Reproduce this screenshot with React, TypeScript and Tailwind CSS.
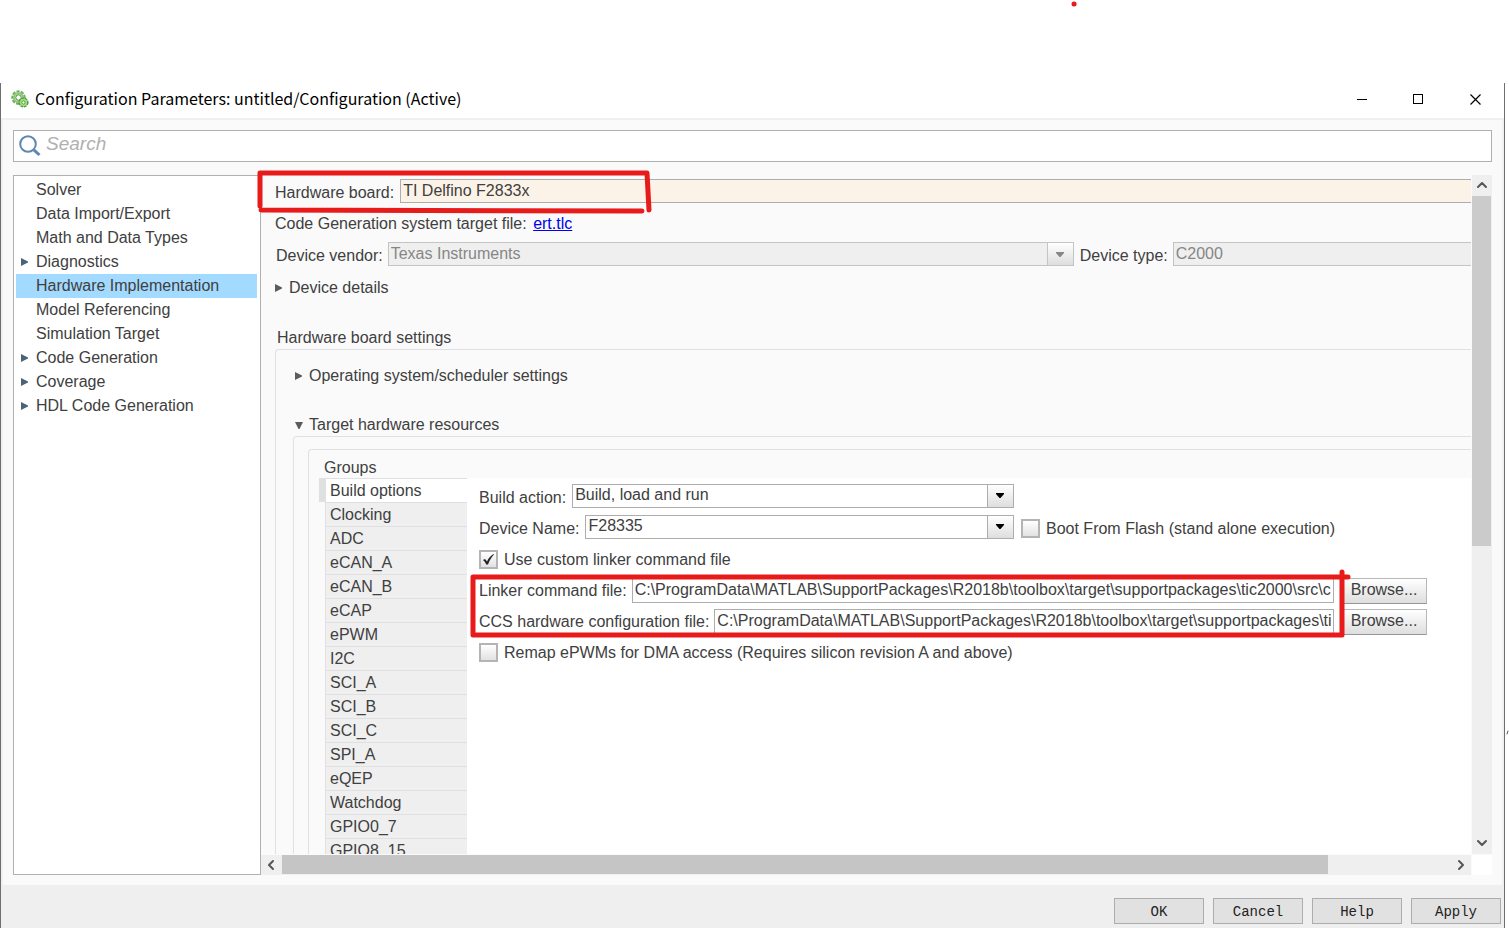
import type { ReactNode } from "react";
import { ChevronDown, ChevronLeft, ChevronRight, ChevronUp } from "lucide-react";
import clsx from "clsx";

interface TreeItem {
  label: string;
  expandable?: boolean;
  selected?: boolean;
}

const TREE: TreeItem[] = [
  { label: "Solver" },
  { label: "Data Import/Export" },
  { label: "Math and Data Types" },
  { label: "Diagnostics", expandable: true },
  { label: "Hardware Implementation", selected: true },
  { label: "Model Referencing" },
  { label: "Simulation Target" },
  { label: "Code Generation", expandable: true },
  { label: "Coverage", expandable: true },
  { label: "HDL Code Generation", expandable: true },
];

const GROUPS = [
  "Build options",
  "Clocking",
  "ADC",
  "eCAN_A",
  "eCAN_B",
  "eCAP",
  "ePWM",
  "I2C",
  "SCI_A",
  "SCI_B",
  "SCI_C",
  "SPI_A",
  "eQEP",
  "Watchdog",
  "GPIO0_7",
  "GPIO8_15",
];

const SUPPORT_PATH = "C:\\ProgramData\\MATLAB\\SupportPackages\\R2018b\\toolbox\\target\\supportpackages\\tic2000\\src\\c28335.cmd";

function Triangle({ open = false, className }: { open?: boolean; className?: string }) {
  return (
    <svg viewBox="0 0 8 8" className={clsx("size-2 shrink-0 fill-current", className)}>
      <path d={open ? "M0 1h8L4.5 8h-1z" : "M0 0l7 3.5v1L0 8z"} />
    </svg>
  );
}

function GearLogo() {
  return (
    <svg viewBox="0 0 18 18" className="size-[18px]">
      <circle cx="7.5" cy="7.5" r="6.2" fill="none" stroke="#6fae5c" strokeWidth="2" strokeDasharray="3.2 1.2" />
      <circle cx="7.5" cy="7.5" r="4.6" fill="#c9ecb6" stroke="#8cc777" strokeWidth="2" />
      <circle cx="7.5" cy="7.5" r="2.7" fill="#fff" stroke="#4f8f40" />
      <circle cx="12.5" cy="12.5" r="4.4" fill="#8fd069" stroke="#4f9a3c" strokeWidth="1.4" strokeDasharray="2.6 1" />
      <circle cx="12.5" cy="12.5" r="3.4" fill="#a9de88" />
      <circle cx="12.5" cy="12.5" r="1.6" fill="#fff" stroke="#4a9a34" />
    </svg>
  );
}

function TitleBar() {
  return (
    <header className="flex h-[37px] shrink-0 items-center border-b-2 border-[#f0f0f0] bg-white pb-[3px] pl-2.5 text-black">
      <GearLogo />
      <h1 className="ml-1.5 flex-1 pb-0.5 font-['Noto_Sans_CJK_SC',sans-serif] text-base leading-5">
        Configuration Parameters: untitled/Configuration (Active)
      </h1>
      <button type="button" aria-label="Minimize" className="flex h-full w-14 items-center justify-center">
        <svg viewBox="0 0 10 10" className="size-2.5" shapeRendering="crispEdges">
          <path d="M0 5.5h10" stroke="currentColor" />
        </svg>
      </button>
      <button type="button" aria-label="Maximize" className="flex h-full w-14 items-center justify-center">
        <svg viewBox="0 0 10 10" className="size-2.5" shapeRendering="crispEdges">
          <path d="M.5.5h9v9h-9z" fill="none" stroke="currentColor" />
        </svg>
      </button>
      <button type="button" aria-label="Close" className="flex h-full w-[58px] items-center justify-center">
        <svg viewBox="0 0 11 11" className="size-[11px]">
          <path d="M.5.5l10 10M10.5.5l-10 10" stroke="currentColor" strokeWidth="1.2" />
        </svg>
      </button>
    </header>
  );
}

function SearchBox() {
  return (
    <div className="flex h-8 shrink-0 items-center border border-[#b0b0b0] bg-white pl-1">
      <svg viewBox="0 0 24 24" className="size-6 shrink-0" fill="none" stroke="#5f87b2">
        <circle cx="10" cy="10" r="7.8" strokeWidth="2" />
        <path d="M15.8 15.8l5.7 5.2" strokeWidth="3" />
      </svg>
      <input
        type="search"
        aria-label="Search"
        placeholder="Search"
        className="mb-1 ml-1 flex-1 text-[19px] leading-6 italic outline-none placeholder:text-[#b0b0b0]"
      />
    </div>
  );
}

function NavTree() {
  return (
    <nav className="w-[248px] shrink-0 border border-[#b0b0b0] bg-white p-0.5 pr-[3px]">
      <ul>
        {TREE.map((item) => (
          <li key={item.label}>
            <button
              type="button"
              className={clsx(
                "flex h-6 w-full items-center pb-px pl-[5px] text-left",
                item.selected && "bg-[#a3daff]"
              )}
            >
              <span className="flex w-[15px] text-[#4c6378]">{item.expandable && <Triangle />}</span>
              {item.label}
            </button>
          </li>
        ))}
      </ul>
    </nav>
  );
}

interface SelectProps {
  id: string;
  value: string;
  disabled?: boolean;
  className?: string;
}

function Select({ id, value, disabled, className }: SelectProps) {
  return (
    <div className={clsx("relative h-6 shrink-0", className)}>
      <select
        id={id}
        disabled={disabled}
        className={clsx(
          "block h-6 w-full appearance-none border pb-px pl-0.5 leading-5 opacity-100",
          disabled ? "border-[#c4c4c4] bg-[#efefef] text-[#868686]" : "border-[#adadad] bg-white"
        )}
      >
        <option>{value}</option>
      </select>
      <span
        className={clsx(
          "pointer-events-none absolute inset-y-0 right-0 flex w-[27px] items-center justify-center border bg-linear-to-b from-white to-[#dedede] pr-px",
          disabled ? "border-[#c4c4c4] text-[#868686]" : "border-[#adadad] text-black"
        )}
      >
        <svg viewBox="0 0 8 5" className="h-[5px] w-2 fill-current">
          <path d="M0 0h8v1L4.5 5h-1L0 1z" />
        </svg>
      </span>
    </div>
  );
}

function CheckBox({ id, label, checked = false }: { id: string; label: string; checked?: boolean }) {
  return (
    <div className="flex items-center gap-1.5">
      <span className="relative size-[19px]">
        <input
          id={id}
          type="checkbox"
          defaultChecked={checked}
          className="peer block size-[19px] appearance-none border-2 border-[#b4b4b4] bg-linear-to-b from-white to-[#e2e2e2]"
        />
        <svg
          viewBox="0 0 19 19"
          className="pointer-events-none absolute inset-0 hidden size-[19px] fill-[#222] peer-checked:block"
        >
          <path d="M4 10l2-1 2 2.6C9.5 8 12 5.2 14.8 4l.2.5C12.500 7 10.500 10.500 9 14.500H7.200C6.500 12.800 5.500 11.300 4 10z" />
        </svg>
      </span>
      <label htmlFor={id}>{label}</label>
    </div>
  );
}

function Row({ children }: { children: ReactNode }) {
  return <div className="flex h-[31px] items-center">{children}</div>;
}

function FileRow({ id, label, value }: { id: string; label: string; value: string }) {
  return (
    <Row>
      <label htmlFor={id} className="shrink-0">
        {label}
      </label>
      <input
        id={id}
        type="text"
        defaultValue={value}
        className="mr-[9px] ml-[5px] h-[25px] min-w-0 flex-1 border border-[#adadad] bg-white px-0.5 pb-0.5"
      />
      <button
        type="button"
        className="h-[26px] w-[84px] shrink-0 border border-[#b8b8b8] border-b-[#969696] bg-linear-to-b from-white to-[#dedede] pr-0.5 pb-px"
      >
        Browse...
      </button>
    </Row>
  );
}

function Disclosure({ label, open }: { label: string; open?: boolean }) {
  return (
    <button type="button" aria-expanded={!!open} className="flex h-[23px] items-center gap-1.5 text-left">
      <Triangle open={open} className="mt-px text-[#5c5c5c]" />
      {label}
    </button>
  );
}

function GroupTabs() {
  return (
    <div role="tablist" aria-label="Groups" className="w-[148px] shrink-0">
      {GROUPS.map((group, i) => (
        <button
          key={group}
          role="tab"
          type="button"
          aria-selected={i === 0}
          className={clsx(
            "block h-6 border-t border-[#e0e0e0] text-left",
            i === 0 ? "w-full border-l-[7px] bg-white pl-1" : "ml-1.5 w-[142px] border-l bg-[#efefef] pl-1"
          )}
        >
          {group}
        </button>
      ))}
    </div>
  );
}

function BuildOptions() {
  return (
    <div role="tabpanel" className="min-w-0 flex-1 bg-white pt-1 pl-3">
      <div className="w-[948px]">
        <Row>
          <div className="flex w-[535px] items-center gap-1.5">
            <label htmlFor="build-action">Build action:</label>
            <Select id="build-action" value="Build, load and run" className="mb-1 flex-1" />
          </div>
        </Row>
        <Row>
          <div className="mr-[7px] flex w-[535px] items-center gap-1.5">
            <label htmlFor="device-name">Device Name:</label>
            <Select id="device-name" value="F28335" className="mb-1 flex-1" />
          </div>
          <CheckBox id="boot-flash" label="Boot From Flash (stand alone execution)" />
        </Row>
        <Row>
          <CheckBox id="custom-linker" label="Use custom linker command file" checked />
        </Row>
        <FileRow id="linker-file" label="Linker command file:" value={SUPPORT_PATH} />
        <FileRow id="ccs-file" label="CCS hardware configuration file:" value={SUPPORT_PATH} />
        <Row>
          <CheckBox id="remap-epwm" label="Remap ePWMs for DMA access (Requires silicon revision A and above)" />
        </Row>
      </div>
    </div>
  );
}

function HardwarePane() {
  return (
    <main className="flex min-h-0 flex-1 flex-col overflow-hidden pl-3.5">
      <div className="flex shrink-0 items-center gap-1.5 pt-1">
        <label htmlFor="hardware-board" className="pt-1">
          Hardware board:
        </label>
        <select
          id="hardware-board"
          className="h-6 flex-1 appearance-none border border-r-0 border-[#adadad] bg-[#fcf3e8] pb-px pl-0.5 leading-5"
        >
          <option>TI Delfino F2833x</option>
        </select>
      </div>
      <p className="mt-[9px] h-6 shrink-0 leading-6">
        Code Generation system target file:{" "}
        <a href="#ert" className="ml-0.5 text-[#0000ee] underline">
          ert.tlc
        </a>
      </p>
      <div className="mt-1.5 flex shrink-0 items-center">
        <label htmlFor="device-vendor" className="shrink-0 pt-1 pr-[5px] pl-px">
          Device vendor:
        </label>
        <Select id="device-vendor" value="Texas Instruments" disabled className="w-[686px]" />
        <label htmlFor="device-type" className="shrink-0 pt-1 pr-[5px] pl-1.5">
          Device type:
        </label>
        <select
          id="device-type"
          disabled
          className="h-6 min-w-0 flex-1 appearance-none border border-r-0 border-[#c4c4c4] bg-[#efefef] pb-px pl-0.5 leading-5 text-[#868686] opacity-100"
        >
          <option>C2000</option>
        </select>
      </div>
      <div className="mt-2.5 shrink-0">
        <Disclosure label="Device details" />
      </div>
      <h2 className="mt-[27px] h-[23px] shrink-0 pl-0.5 leading-6">Hardware board settings</h2>
      <section className="flex min-h-0 flex-1 flex-col rounded-tl border-t border-l border-[#e0e0e0] pt-3.5 pl-[17px]">
        <div className="pl-0.5">
          <Disclosure label="Operating system/scheduler settings" />
        </div>
        <div className="mt-[26px] pl-0.5">
          <Disclosure label="Target hardware resources" open />
        </div>
        <div className="flex min-h-0 flex-1 flex-col rounded-tl border-t border-l border-[#e0e0e0] pt-3 pl-3.5">
          <div className="flex min-h-0 flex-1 flex-col rounded-tl border-t border-l border-[#e0e0e0] pt-2 pl-2.5">
            <h3 className="h-5 shrink-0 pl-[5px] leading-5">Groups</h3>
            <div className="flex min-h-0 flex-1">
              <GroupTabs />
              <BuildOptions />
            </div>
          </div>
        </div>
      </section>
    </main>
  );
}

function ScrollBars({ children }: { children: ReactNode }) {
  return (
    <div className="grid min-w-0 flex-1 grid-cols-[minmax(0,1fr)_20px] grid-rows-[minmax(0,1fr)_20px] gap-px bg-[#fafafa]">
      <div className="flex min-h-0 min-w-0">{children}</div>
      <div className="flex min-h-0 flex-col items-center bg-[#efefef] text-[#555]">
        <ChevronUp className="mt-0.5 mb-[3px] size-4 shrink-0" strokeWidth={3} />
        <div className="mr-px h-[350px] w-[19px] bg-[#cbcbcb]" />
        <ChevronDown className="mt-auto mb-[3px] size-4 shrink-0" strokeWidth={3} />
      </div>
      <div className="flex items-center bg-[#efefef] text-[#555]">
        <ChevronLeft className="mr-[3px] ml-0.5 size-4 shrink-0" strokeWidth={3} />
        <div className="mb-px h-[19px] w-[1046px] bg-[#c5c5c5]" />
        <ChevronRight className="mr-0.5 ml-auto size-4 shrink-0" strokeWidth={3} />
      </div>
      <div className="bg-white" />
    </div>
  );
}

function Footer() {
  return (
    <footer className="flex shrink-0 justify-end gap-[9px] bg-[#efefef] pt-[13px] pr-[3px] pb-1">
      {["OK", "Cancel", "Help", "Apply"].map((label) => (
        <button
          key={label}
          type="button"
          className="h-[26px] w-[90px] border border-[#adadad] bg-[#e1e1e1] pt-px font-['Liberation_Mono',monospace] text-sm text-[#222]"
        >
          {label}
        </button>
      ))}
    </footer>
  );
}

/** Hand-drawn red pen marks on top of the dialog */
function PenMarks() {
  return (
    <svg
      aria-hidden="true"
      className="pointer-events-none absolute inset-0 size-full"
      fill="none"
      stroke="#e81b1b"
      strokeWidth="5"
      strokeLinecap="round"
      strokeLinejoin="round"
    >
      <path d="M1074 4h.1" />
      <path d="M260 206V173H647L649 210M261 210L642 211" />
      <path d="M1348 577H473V635H1342M1342 572V635" />
      <path d="M1508 731l-1 3" stroke="#555" strokeWidth="1" />
    </svg>
  );
}

export default function App() {
  return (
    <div className="relative flex h-screen flex-col overflow-hidden bg-white pt-[83px] pr-1 font-['Liberation_Sans',Arial,sans-serif] text-base leading-5 text-[#404040]">
      <div className="flex min-h-0 flex-1 flex-col border-x border-[#6e6e6e]">
        <TitleBar />
        <div className="flex min-h-0 flex-1 flex-col gap-[13px] border-x-2 border-[#f0f0f0] bg-[#fafafa] px-2.5 py-2.5">
          <SearchBox />
          <div className="flex min-h-0 flex-1">
            <NavTree />
            <ScrollBars>
              <HardwarePane />
            </ScrollBars>
          </div>
        </div>
        <Footer />
      </div>
      <PenMarks />
    </div>
  );
}
